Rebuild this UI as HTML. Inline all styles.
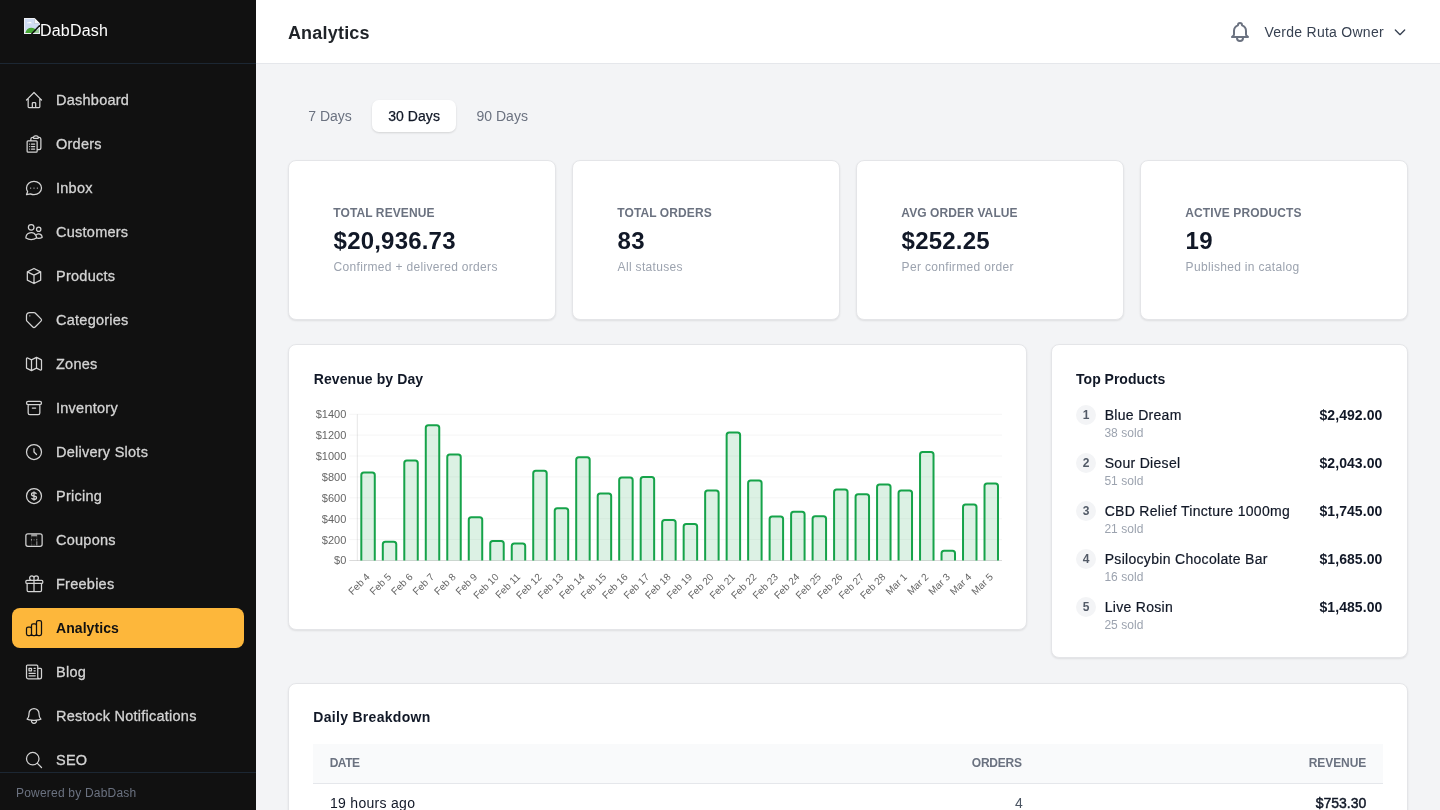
<!DOCTYPE html>
<html><head><meta charset="utf-8"><title>Analytics</title>
<style>
*{box-sizing:border-box;margin:0;padding:0}
html,body{width:1440px;height:810px;overflow:hidden;background:#f3f4f6;font-family:"Liberation Sans",sans-serif;color:#111827}
#side{position:absolute;left:0;top:0;width:256px;height:810px;background:#111111;overflow:hidden}
#shead{position:absolute;left:0;top:0;width:256px;height:64px;border-bottom:1px solid #1c2733}
#logo{position:absolute;left:24px;top:18px}
#lname{position:absolute;left:40px;top:21px;font-size:16px;line-height:20px;color:#fff;letter-spacing:.2px}
.ni{position:absolute;left:12px;width:232px;height:40px;border-radius:8px;color:#d4d4d4;font-size:14.5px;font-weight:400}
.ni .ic{position:absolute;left:12px;top:10px}
.ni span{position:absolute;left:44px;top:11px;line-height:18px;white-space:nowrap;-webkit-text-stroke:.3px currentColor;letter-spacing:.25px}
.ni.act{background:#fdb73b;color:#111;}
.ni.act span{font-weight:700;-webkit-text-stroke:0;letter-spacing:.07px;font-size:14px}
#sfoot{position:absolute;left:0;top:772px;width:256px;height:38px;background:#111111;border-top:1px solid #1c2733}
#sfoot span{position:absolute;left:16px;top:13px;font-size:12px;line-height:14px;color:#6b7280;letter-spacing:.2px}
#top{position:absolute;left:256px;top:0;width:1184px;height:64px;background:#fff;border-bottom:1px solid #e5e7eb}
#bell{position:absolute;left:1228px;top:20px;color:#6b7280}
#chev{position:absolute;left:1392px;top:24px;color:#374151}
.t{position:absolute;white-space:nowrap}
.pill{position:absolute;left:372px;top:100px;width:84px;height:32px;border-radius:7px;background:#fff;box-shadow:0 1px 2px rgba(0,0,0,.08),0 1px 3px rgba(0,0,0,.07)}
.card{position:absolute;background:#fff;border:1px solid #e4e5e8;border-radius:8px;box-shadow:0 1px 2px rgba(0,0,0,.09)}
.chart{position:absolute;left:0;top:0;pointer-events:none}
.tk{font-family:"Liberation Sans",sans-serif;font-size:11px;fill:#666}
.rk{position:absolute;left:1076px;width:20px;height:20px;border-radius:10px;background:#f3f4f6;color:#525a67;font-size:12px;font-weight:700;line-height:20px;text-align:center}
#thead{position:absolute;left:313px;top:744px;width:1070px;height:39.5px;background:#f9fafb;border-bottom:1px solid #e5e7eb}
#wrap{position:absolute;left:0;top:0;width:1440px;height:810px;will-change:transform}
</style></head><body><div id="wrap">
<div id="side">
<div id="shead">
<svg id="logo" width="16" height="16" viewBox="0 0 16 16"><path d="M0 0h10.500L16 5.500V16H0z" fill="#eef0f4"/><path d="M1 1h9l5 5v9H1z" fill="#cfdcf3"/><path d="M10.500 0v5.500H16z" fill="#f6f7f9"/><path d="M10.500 0.800v4.700h4.700" fill="none" stroke="#b9c0cc" stroke-width=".6"/><path d="M2.800 5.200c.4-1 1.300-1.200 1.900-.7.500-1.100 2.200-1 2.600.2.700 0 .9.300.9.500z" fill="#fff"/><path d="M1.300 15c.8-3.300 3.200-5.200 6-5.200 2.200 0 4 1 5.200 2.600l2.500-1.500V15z" fill="#46a635"/><path d="M16 7.200L7.500 16" stroke="#111" stroke-width="1.600"/><path d="M16 9v7h-7z" fill="#e9eef5" opacity=".55"/></svg>
<div id="lname">DabDash</div>
</div>
<a class="ni" style="top:80px"><svg class="ic" width="20" height="20" viewBox="0 0 24 24" fill="none" stroke="currentColor" stroke-width="1.5" stroke-linecap="round" stroke-linejoin="round" ><path d="M3 12l2-2m0 0l7-7 7 7M5 10v10a1 1 0 001 1h3m10-11l2 2m-2-2v10a1 1 0 01-1 1h-3m-6 0a1 1 0 001-1v-4a1 1 0 011-1h2a1 1 0 011 1v4a1 1 0 001 1m-6 0h6"/></svg><span>Dashboard</span></a>
<a class="ni" style="top:124px"><svg class="ic" width="20" height="20" viewBox="0 0 24 24" fill="none" stroke="currentColor" stroke-width="1.5" stroke-linecap="round" stroke-linejoin="round" ><path d="M9 12h3.75M9 15h3.75M9 18h3.75m3 .75H18a2.25 2.25 0 002.25-2.25V6.108c0-1.135-.845-2.098-1.976-2.192a48.424 48.424 0 00-1.123-.08m-5.801 0c-.065.21-.1.433-.1.664 0 .414.336.75.75.75h4.5a.75.75 0 00.75-.75 2.25 2.25 0 00-.1-.664m-5.8 0A2.251 2.251 0 0113.5 2.25H15c1.012 0 1.867.668 2.15 1.586m-5.8 0c-.376.023-.75.05-1.124.08C9.095 4.01 8.25 4.973 8.25 6.108V8.25m0 0H4.875c-.621 0-1.125.504-1.125 1.125v11.25c0 .621.504 1.125 1.125 1.125h9.75c.621 0 1.125-.504 1.125-1.125V9.375c0-.621-.504-1.125-1.125-1.125H8.25zM6.75 12h.008v.008H6.75V12zm0 3h.008v.008H6.75V15zm0 3h.008v.008H6.75V18z"/></svg><span>Orders</span></a>
<a class="ni" style="top:168px"><svg class="ic" width="20" height="20" viewBox="0 0 24 24" fill="none" stroke="currentColor" stroke-width="1.5" stroke-linecap="round" stroke-linejoin="round" ><path d="M8 12h.01M12 12h.01M16 12h.01M21 12c0 4.418-4.03 8-9 8a9.863 9.863 0 01-4.255-.949L3 20l1.395-3.72C3.512 15.042 3 13.574 3 12c0-4.418 4.03-8 9-8s9 3.582 9 8z"/></svg><span>Inbox</span></a>
<a class="ni" style="top:212px"><svg class="ic" width="20" height="20" viewBox="0 0 24 24" fill="none" stroke="currentColor" stroke-width="1.5" stroke-linecap="round" stroke-linejoin="round" ><path d="M15 19.128a9.38 9.38 0 002.625.372 9.337 9.337 0 004.121-.952 4.125 4.125 0 00-7.533-2.493M15 19.128v-.003c0-1.113-.285-2.16-.786-3.07M15 19.128v.106A12.318 12.318 0 018.624 21c-2.331 0-4.512-.645-6.374-1.766l-.001-.109a6.375 6.375 0 0111.964-3.07M12 6.375a3.375 3.375 0 11-6.75 0 3.375 3.375 0 016.75 0zm8.25 2.25a2.625 2.625 0 11-5.25 0 2.625 2.625 0 015.25 0z"/></svg><span>Customers</span></a>
<a class="ni" style="top:256px"><svg class="ic" width="20" height="20" viewBox="0 0 24 24" fill="none" stroke="currentColor" stroke-width="1.5" stroke-linecap="round" stroke-linejoin="round" ><path d="M20 7l-8-4-8 4m16 0l-8 4m8-4v10l-8 4m0-10L4 7m8 4v10M4 7v10l8 4"/></svg><span>Products</span></a>
<a class="ni" style="top:300px"><svg class="ic" width="20" height="20" viewBox="0 0 24 24" fill="none" stroke="currentColor" stroke-width="1.5" stroke-linecap="round" stroke-linejoin="round" ><path d="M7 7h.01M7 3h5c.512 0 1.024.195 1.414.586l7 7a2 2 0 010 2.828l-7 7a2 2 0 01-2.828 0l-7-7A1.994 1.994 0 013 12V7a4 4 0 014-4z"/></svg><span>Categories</span></a>
<a class="ni" style="top:344px"><svg class="ic" width="20" height="20" viewBox="0 0 24 24" fill="none" stroke="currentColor" stroke-width="1.5" stroke-linecap="round" stroke-linejoin="round" ><path d="M9 20l-5.447-2.724A1 1 0 013 16.382V5.618a1 1 0 011.447-.894L9 7m0 13l6-3m-6 3V7m6 10l4.553 2.276A1 1 0 0021 18.382V7.618a1 1 0 00-.553-.894L15 4m0 13V4m0 0L9 7"/></svg><span>Zones</span></a>
<a class="ni" style="top:388px"><svg class="ic" width="20" height="20" viewBox="0 0 24 24" fill="none" stroke="currentColor" stroke-width="1.5" stroke-linecap="round" stroke-linejoin="round" ><path d="M5 8h14M5 8a2 2 0 110-4h14a2 2 0 110 4M5 8v10a2 2 0 002 2h10a2 2 0 002-2V8m-9 4h4"/></svg><span>Inventory</span></a>
<a class="ni" style="top:432px"><svg class="ic" width="20" height="20" viewBox="0 0 24 24" fill="none" stroke="currentColor" stroke-width="1.5" stroke-linecap="round" stroke-linejoin="round" ><path d="M12 8v4l3 3m6-3a9 9 0 11-18 0 9 9 0 0118 0z"/></svg><span>Delivery Slots</span></a>
<a class="ni" style="top:476px"><svg class="ic" width="20" height="20" viewBox="0 0 24 24" fill="none" stroke="currentColor" stroke-width="1.5" stroke-linecap="round" stroke-linejoin="round" ><path d="M12 8c-1.657 0-3 .895-3 2s1.343 2 3 2 3 .895 3 2-1.343 2-3 2m0-8c1.11 0 2.08.402 2.599 1M12 8V7m0 1v8m0 0v1m0-1c-1.11 0-2.08-.402-2.599-1M21 12a9 9 0 11-18 0 9 9 0 0118 0z"/></svg><span>Pricing</span></a>
<a class="ni" style="top:520px"><svg class="ic" width="20" height="20" viewBox="0 0 24 24" fill="none" stroke="currentColor" stroke-width="1.5" stroke-linecap="round" stroke-linejoin="round" ><rect x="2.25" y="4.6" width="19.5" height="15" rx="2.4"/><path d="M8.600 6.400h7.200" stroke-width="2.400" stroke-linecap="butt" opacity=".7"/><path d="M8.900 7.500v11M15.400 7.500v3" stroke-width="1" opacity=".18"/><path d="M9 11.700h.01M15.300 11.700h.01" stroke-width="1.500"/><path d="M12.100 11.700h.01" stroke-width="1.500" opacity=".55"/><path d="M15.400 13.500v5" stroke-width="1.100" stroke-linecap="butt" opacity=".8"/><path d="M9.500 17.800h.01M12.100 17.800h.01" stroke-width="1.300" opacity=".4"/></svg><span>Coupons</span></a>
<a class="ni" style="top:564px"><svg class="ic" width="20" height="20" viewBox="0 0 24 24" fill="none" stroke="currentColor" stroke-width="1.5" stroke-linecap="round" stroke-linejoin="round" ><path d="M21 11.25v8.25a1.5 1.5 0 01-1.5 1.5H5.25a1.5 1.5 0 01-1.5-1.5v-8.25M12 4.875A2.625 2.625 0 109.375 7.5H12m0-2.625V7.5m0-2.625A2.625 2.625 0 1114.625 7.5H12m0 0V21m-8.625-9.75h18c.621 0 1.125-.504 1.125-1.125v-1.5c0-.621-.504-1.125-1.125-1.125h-18c-.621 0-1.125.504-1.125 1.125v1.5c0 .621.504 1.125 1.125 1.125z"/></svg><span>Freebies</span></a>
<a class="ni act" style="top:608px"><svg class="ic" width="20" height="20" viewBox="0 0 24 24" fill="none" stroke="currentColor" stroke-width="1.5" stroke-linecap="round" stroke-linejoin="round" ><path d="M9 19v-6a2 2 0 00-2-2H5a2 2 0 00-2 2v6a2 2 0 002 2h2a2 2 0 002-2zm0 0V9a2 2 0 012-2h2a2 2 0 012 2v10m-6 0a2 2 0 002 2h2a2 2 0 002-2m0 0V5a2 2 0 012-2h2a2 2 0 012 2v14a2 2 0 01-2 2h-2a2 2 0 01-2-2z"/></svg><span>Analytics</span></a>
<a class="ni" style="top:652px"><svg class="ic" width="20" height="20" viewBox="0 0 24 24" fill="none" stroke="currentColor" stroke-width="1.5" stroke-linecap="round" stroke-linejoin="round" ><path d="M12 7.5h1.5m-1.5 3h1.5m-7.500 3h7.500m-7.500 3h7.500m3-9h3.375c.621 0 1.125.504 1.125 1.125V18a2.250 2.250 0 01-2.250 2.250M16.500 7.500V18a2.250 2.250 0 002.250 2.250M16.500 7.500V4.875c0-.621-.504-1.125-1.125-1.125H4.125C3.504 3.750 3 4.254 3 4.875V18a2.250 2.250 0 002.250 2.250h13.500M6 7.500h3v3H6v-3z"/></svg><span>Blog</span></a>
<a class="ni" style="top:696px"><svg class="ic" width="20" height="20" viewBox="0 0 24 24" fill="none" stroke="currentColor" stroke-width="1.5" stroke-linecap="round" stroke-linejoin="round" ><path d="M14.857 17.082a23.848 23.848 0 005.454-1.310A8.967 8.967 0 0118 9.750v-.700V9A6 6 0 006 9v.750a8.967 8.967 0 01-2.312 6.022c1.733.640 3.560 1.085 5.455 1.310m5.714 0a24.255 24.255 0 01-5.714 0m5.714 0a3 3 0 11-5.714 0"/></svg><span>Restock Notifications</span></a>
<a class="ni" style="top:740px"><svg class="ic" width="20" height="20" viewBox="0 0 24 24" fill="none" stroke="currentColor" stroke-width="1.5" stroke-linecap="round" stroke-linejoin="round" ><path d="M21 21l-5.197-5.197m0 0A7.500 7.500 0 105.196 5.196a7.500 7.500 0 0010.607 10.607z"/></svg><span>SEO</span></a>

<div id="sfoot"><span>Powered by DabDash</span></div>
</div>
<div id="top"></div>
<div id="bell"><svg class="ic" width="24" height="24" viewBox="0 0 24 24" fill="none" stroke="currentColor" stroke-width="2" stroke-linecap="round" stroke-linejoin="round" ><path d="M15 17h5l-1.405-1.405A2.032 2.032 0 0118 14.158V11a6.002 6.002 0 00-4-5.659V5a2 2 0 10-4 0v.341C7.670 6.165 6 8.388 6 11v3.159c0 .538-.214 1.055-.595 1.436L4 17h5m6 0v1a3 3 0 11-6 0v-1m6 0H9"/></svg></div>
<div id="chev"><svg class="ic" width="16" height="16" viewBox="0 0 24 24" fill="none" stroke="currentColor" stroke-width="2" stroke-linecap="round" stroke-linejoin="round" ><path d="M19 9l-7 7-7-7"/></svg></div>
<div class="t" style="font-size:18px;line-height:20px;color:#1f2328;letter-spacing:0.205px;top:22.80px;font-weight:700;left:287.90px;">Analytics</div>
<div class="t" style="font-size:14px;line-height:20px;color:#374151;letter-spacing:0.261px;top:22.00px;left:1264.50px;">Verde Ruta Owner</div>
<div class="pill"></div><div class="t" style="font-size:14px;line-height:20px;color:#6b7280;letter-spacing:-0.013px;top:106.10px;left:308.25px;">7 Days</div>
<div class="t" style="font-size:14px;line-height:20px;color:#111827;letter-spacing:0.037px;top:106.10px;left:388.30px;-webkit-text-stroke:.25px #111827;">30 Days</div>
<div class="t" style="font-size:14px;line-height:20px;color:#6b7280;letter-spacing:0.038px;top:106.10px;left:476.40px;">90 Days</div>
<div class="card" style="left:288px;top:160px;width:268px;height:160px"></div><div class="t" style="font-size:12px;line-height:20px;color:#6b7280;letter-spacing:0.104px;top:202.60px;font-weight:700;left:333.25px;">TOTAL REVENUE</div>
<div class="t" style="font-size:24px;line-height:32px;color:#111827;letter-spacing:0.197px;top:225.25px;font-weight:700;left:333.60px;">$20,936.73</div>
<div class="t" style="font-size:12px;line-height:20px;color:#9ca3af;letter-spacing:0.324px;top:256.60px;left:333.60px;">Confirmed + delivered orders</div>
<div class="card" style="left:572px;top:160px;width:268px;height:160px"></div><div class="t" style="font-size:12px;line-height:20px;color:#6b7280;letter-spacing:0.104px;top:202.60px;font-weight:700;left:617.25px;">TOTAL ORDERS</div>
<div class="t" style="font-size:24px;line-height:32px;color:#111827;letter-spacing:0.197px;top:225.25px;font-weight:700;left:617.60px;">83</div>
<div class="t" style="font-size:12px;line-height:20px;color:#9ca3af;letter-spacing:0.324px;top:256.60px;left:617.60px;">All statuses</div>
<div class="card" style="left:856px;top:160px;width:268px;height:160px"></div><div class="t" style="font-size:12px;line-height:20px;color:#6b7280;letter-spacing:0.104px;top:202.60px;font-weight:700;left:901.25px;">AVG ORDER VALUE</div>
<div class="t" style="font-size:24px;line-height:32px;color:#111827;letter-spacing:0.197px;top:225.25px;font-weight:700;left:901.60px;">$252.25</div>
<div class="t" style="font-size:12px;line-height:20px;color:#9ca3af;letter-spacing:0.324px;top:256.60px;left:901.60px;">Per confirmed order</div>
<div class="card" style="left:1140px;top:160px;width:268px;height:160px"></div><div class="t" style="font-size:12px;line-height:20px;color:#6b7280;letter-spacing:0.104px;top:202.60px;font-weight:700;left:1185.25px;">ACTIVE PRODUCTS</div>
<div class="t" style="font-size:24px;line-height:32px;color:#111827;letter-spacing:0.197px;top:225.25px;font-weight:700;left:1185.60px;">19</div>
<div class="t" style="font-size:12px;line-height:20px;color:#9ca3af;letter-spacing:0.324px;top:256.60px;left:1185.60px;">Published in catalog</div>
<div class="card" style="left:288px;top:344px;width:739px;height:286px"></div><div class="t" style="font-size:14px;line-height:20px;color:#111827;letter-spacing:0.089px;top:368.90px;font-weight:700;left:313.75px;">Revenue by Day</div>
<svg class="chart" width="1440" height="810" viewBox="0 0 1440 810"><line x1="349.30" y1="414.25" x2="1002.00" y2="414.25" stroke="rgba(0,0,0,0.045)" stroke-width="1"/><text x="346.30" y="418.15" text-anchor="end" class="tk">$1400</text><line x1="349.30" y1="435.14" x2="1002.00" y2="435.14" stroke="rgba(0,0,0,0.045)" stroke-width="1"/><text x="346.30" y="439.04" text-anchor="end" class="tk">$1200</text><line x1="349.30" y1="456.04" x2="1002.00" y2="456.04" stroke="rgba(0,0,0,0.045)" stroke-width="1"/><text x="346.30" y="459.94" text-anchor="end" class="tk">$1000</text><line x1="349.30" y1="476.93" x2="1002.00" y2="476.93" stroke="rgba(0,0,0,0.045)" stroke-width="1"/><text x="346.30" y="480.83" text-anchor="end" class="tk">$800</text><line x1="349.30" y1="497.82" x2="1002.00" y2="497.82" stroke="rgba(0,0,0,0.045)" stroke-width="1"/><text x="346.30" y="501.72" text-anchor="end" class="tk">$600</text><line x1="349.30" y1="518.71" x2="1002.00" y2="518.71" stroke="rgba(0,0,0,0.045)" stroke-width="1"/><text x="346.30" y="522.61" text-anchor="end" class="tk">$400</text><line x1="349.30" y1="539.61" x2="1002.00" y2="539.61" stroke="rgba(0,0,0,0.045)" stroke-width="1"/><text x="346.30" y="543.51" text-anchor="end" class="tk">$200</text><line x1="349.30" y1="560.50" x2="1002.00" y2="560.50" stroke="rgba(0,0,0,0.045)" stroke-width="1"/><text x="346.30" y="564.40" text-anchor="end" class="tk">$0</text><line x1="357.30" y1="414.25" x2="357.30" y2="560.50" stroke="rgba(0,0,0,0.1)" stroke-width="1"/><line x1="349.30" y1="560.50" x2="1002.00" y2="560.50" stroke="rgba(0,0,0,0.11)" stroke-width="1"/><path d="M361.31 560.50V475.10Q361.31 472.60 363.81 472.60H372.28Q374.78 472.60 374.78 475.10V560.50" fill="rgba(22,163,74,0.15)" stroke="#16a34a" stroke-width="2" stroke-linecap="butt"/><text transform="translate(363.75,570.80) rotate(-45)" text-anchor="end" class="tk" style="font-size:10px" y="9.5">Feb 4</text><path d="M382.80 560.50V544.20Q382.80 541.70 385.30 541.70H393.77Q396.27 541.70 396.27 544.20V560.50" fill="rgba(22,163,74,0.15)" stroke="#16a34a" stroke-width="2" stroke-linecap="butt"/><text transform="translate(385.24,570.80) rotate(-45)" text-anchor="end" class="tk" style="font-size:10px" y="9.5">Feb 5</text><path d="M404.29 560.50V462.90Q404.29 460.40 406.79 460.40H415.26Q417.76 460.40 417.76 462.90V560.50" fill="rgba(22,163,74,0.15)" stroke="#16a34a" stroke-width="2" stroke-linecap="butt"/><text transform="translate(406.73,570.80) rotate(-45)" text-anchor="end" class="tk" style="font-size:10px" y="9.5">Feb 6</text><path d="M425.78 560.50V427.80Q425.78 425.30 428.28 425.30H436.75Q439.25 425.30 439.25 427.80V560.50" fill="rgba(22,163,74,0.15)" stroke="#16a34a" stroke-width="2" stroke-linecap="butt"/><text transform="translate(428.21,570.80) rotate(-45)" text-anchor="end" class="tk" style="font-size:10px" y="9.5">Feb 7</text><path d="M447.27 560.50V456.90Q447.27 454.40 449.77 454.40H458.24Q460.74 454.40 460.74 456.90V560.50" fill="rgba(22,163,74,0.15)" stroke="#16a34a" stroke-width="2" stroke-linecap="butt"/><text transform="translate(449.70,570.80) rotate(-45)" text-anchor="end" class="tk" style="font-size:10px" y="9.5">Feb 8</text><path d="M468.76 560.50V519.70Q468.76 517.20 471.26 517.20H479.73Q482.23 517.20 482.23 519.70V560.50" fill="rgba(22,163,74,0.15)" stroke="#16a34a" stroke-width="2" stroke-linecap="butt"/><text transform="translate(471.19,570.80) rotate(-45)" text-anchor="end" class="tk" style="font-size:10px" y="9.5">Feb 9</text><path d="M490.25 560.50V543.60Q490.25 541.10 492.75 541.10H501.22Q503.72 541.10 503.72 543.60V560.50" fill="rgba(22,163,74,0.15)" stroke="#16a34a" stroke-width="2" stroke-linecap="butt"/><text transform="translate(492.69,570.80) rotate(-45)" text-anchor="end" class="tk" style="font-size:10px" y="9.5">Feb 10</text><path d="M511.74 560.50V545.90Q511.74 543.40 514.24 543.40H522.71Q525.21 543.40 525.21 545.90V560.50" fill="rgba(22,163,74,0.15)" stroke="#16a34a" stroke-width="2" stroke-linecap="butt"/><text transform="translate(514.18,570.80) rotate(-45)" text-anchor="end" class="tk" style="font-size:10px" y="9.5">Feb 11</text><path d="M533.23 560.50V473.20Q533.23 470.70 535.73 470.70H544.20Q546.70 470.70 546.70 473.20V560.50" fill="rgba(22,163,74,0.15)" stroke="#16a34a" stroke-width="2" stroke-linecap="butt"/><text transform="translate(535.67,570.80) rotate(-45)" text-anchor="end" class="tk" style="font-size:10px" y="9.5">Feb 12</text><path d="M554.72 560.50V510.70Q554.72 508.20 557.22 508.20H565.69Q568.19 508.20 568.19 510.70V560.50" fill="rgba(22,163,74,0.15)" stroke="#16a34a" stroke-width="2" stroke-linecap="butt"/><text transform="translate(557.16,570.80) rotate(-45)" text-anchor="end" class="tk" style="font-size:10px" y="9.5">Feb 13</text><path d="M576.21 560.50V459.80Q576.21 457.30 578.71 457.30H587.18Q589.68 457.30 589.68 459.80V560.50" fill="rgba(22,163,74,0.15)" stroke="#16a34a" stroke-width="2" stroke-linecap="butt"/><text transform="translate(578.65,570.80) rotate(-45)" text-anchor="end" class="tk" style="font-size:10px" y="9.5">Feb 14</text><path d="M597.70 560.50V496.10Q597.70 493.60 600.20 493.60H608.67Q611.17 493.60 611.17 496.10V560.50" fill="rgba(22,163,74,0.15)" stroke="#16a34a" stroke-width="2" stroke-linecap="butt"/><text transform="translate(600.14,570.80) rotate(-45)" text-anchor="end" class="tk" style="font-size:10px" y="9.5">Feb 15</text><path d="M619.19 560.50V480.10Q619.19 477.60 621.69 477.60H630.16Q632.66 477.60 632.66 480.10V560.50" fill="rgba(22,163,74,0.15)" stroke="#16a34a" stroke-width="2" stroke-linecap="butt"/><text transform="translate(621.62,570.80) rotate(-45)" text-anchor="end" class="tk" style="font-size:10px" y="9.5">Feb 16</text><path d="M640.68 560.50V479.50Q640.68 477.00 643.18 477.00H651.65Q654.15 477.00 654.15 479.50V560.50" fill="rgba(22,163,74,0.15)" stroke="#16a34a" stroke-width="2" stroke-linecap="butt"/><text transform="translate(643.12,570.80) rotate(-45)" text-anchor="end" class="tk" style="font-size:10px" y="9.5">Feb 17</text><path d="M662.17 560.50V522.50Q662.17 520.00 664.67 520.00H673.14Q675.64 520.00 675.64 522.50V560.50" fill="rgba(22,163,74,0.15)" stroke="#16a34a" stroke-width="2" stroke-linecap="butt"/><text transform="translate(664.61,570.80) rotate(-45)" text-anchor="end" class="tk" style="font-size:10px" y="9.5">Feb 18</text><path d="M683.66 560.50V526.40Q683.66 523.90 686.16 523.90H694.63Q697.13 523.90 697.13 526.40V560.50" fill="rgba(22,163,74,0.15)" stroke="#16a34a" stroke-width="2" stroke-linecap="butt"/><text transform="translate(686.10,570.80) rotate(-45)" text-anchor="end" class="tk" style="font-size:10px" y="9.5">Feb 19</text><path d="M705.15 560.50V492.90Q705.15 490.40 707.65 490.40H716.12Q718.62 490.40 718.62 492.90V560.50" fill="rgba(22,163,74,0.15)" stroke="#16a34a" stroke-width="2" stroke-linecap="butt"/><text transform="translate(707.59,570.80) rotate(-45)" text-anchor="end" class="tk" style="font-size:10px" y="9.5">Feb 20</text><path d="M726.64 560.50V434.90Q726.64 432.40 729.14 432.40H737.61Q740.11 432.40 740.11 434.90V560.50" fill="rgba(22,163,74,0.15)" stroke="#16a34a" stroke-width="2" stroke-linecap="butt"/><text transform="translate(729.08,570.80) rotate(-45)" text-anchor="end" class="tk" style="font-size:10px" y="9.5">Feb 21</text><path d="M748.13 560.50V482.90Q748.13 480.40 750.63 480.40H759.10Q761.60 480.40 761.60 482.90V560.50" fill="rgba(22,163,74,0.15)" stroke="#16a34a" stroke-width="2" stroke-linecap="butt"/><text transform="translate(750.57,570.80) rotate(-45)" text-anchor="end" class="tk" style="font-size:10px" y="9.5">Feb 22</text><path d="M769.62 560.50V519.10Q769.62 516.60 772.12 516.60H780.59Q783.09 516.60 783.09 519.10V560.50" fill="rgba(22,163,74,0.15)" stroke="#16a34a" stroke-width="2" stroke-linecap="butt"/><text transform="translate(772.06,570.80) rotate(-45)" text-anchor="end" class="tk" style="font-size:10px" y="9.5">Feb 23</text><path d="M791.11 560.50V514.30Q791.11 511.80 793.61 511.80H802.08Q804.58 511.80 804.58 514.30V560.50" fill="rgba(22,163,74,0.15)" stroke="#16a34a" stroke-width="2" stroke-linecap="butt"/><text transform="translate(793.55,570.80) rotate(-45)" text-anchor="end" class="tk" style="font-size:10px" y="9.5">Feb 24</text><path d="M812.60 560.50V518.70Q812.60 516.20 815.10 516.20H823.57Q826.07 516.20 826.07 518.70V560.50" fill="rgba(22,163,74,0.15)" stroke="#16a34a" stroke-width="2" stroke-linecap="butt"/><text transform="translate(815.04,570.80) rotate(-45)" text-anchor="end" class="tk" style="font-size:10px" y="9.5">Feb 25</text><path d="M834.09 560.50V491.90Q834.09 489.40 836.59 489.40H845.06Q847.56 489.40 847.56 491.90V560.50" fill="rgba(22,163,74,0.15)" stroke="#16a34a" stroke-width="2" stroke-linecap="butt"/><text transform="translate(836.53,570.80) rotate(-45)" text-anchor="end" class="tk" style="font-size:10px" y="9.5">Feb 26</text><path d="M855.58 560.50V496.70Q855.58 494.20 858.08 494.20H866.55Q869.05 494.20 869.05 496.70V560.50" fill="rgba(22,163,74,0.15)" stroke="#16a34a" stroke-width="2" stroke-linecap="butt"/><text transform="translate(858.02,570.80) rotate(-45)" text-anchor="end" class="tk" style="font-size:10px" y="9.5">Feb 27</text><path d="M877.07 560.50V487.00Q877.07 484.50 879.57 484.50H888.04Q890.54 484.50 890.54 487.00V560.50" fill="rgba(22,163,74,0.15)" stroke="#16a34a" stroke-width="2" stroke-linecap="butt"/><text transform="translate(879.51,570.80) rotate(-45)" text-anchor="end" class="tk" style="font-size:10px" y="9.5">Feb 28</text><path d="M898.56 560.50V492.90Q898.56 490.40 901.06 490.40H909.53Q912.03 490.40 912.03 492.90V560.50" fill="rgba(22,163,74,0.15)" stroke="#16a34a" stroke-width="2" stroke-linecap="butt"/><text transform="translate(901.00,570.80) rotate(-45)" text-anchor="end" class="tk" style="font-size:10px" y="9.5">Mar 1</text><path d="M920.05 560.50V454.60Q920.05 452.10 922.55 452.10H931.02Q933.52 452.10 933.52 454.60V560.50" fill="rgba(22,163,74,0.15)" stroke="#16a34a" stroke-width="2" stroke-linecap="butt"/><text transform="translate(922.49,570.80) rotate(-45)" text-anchor="end" class="tk" style="font-size:10px" y="9.5">Mar 2</text><path d="M941.54 560.50V553.20Q941.54 550.70 944.04 550.70H952.51Q955.01 550.70 955.01 553.20V560.50" fill="rgba(22,163,74,0.15)" stroke="#16a34a" stroke-width="2" stroke-linecap="butt"/><text transform="translate(943.98,570.80) rotate(-45)" text-anchor="end" class="tk" style="font-size:10px" y="9.5">Mar 3</text><path d="M963.03 560.50V506.90Q963.03 504.40 965.53 504.40H974.00Q976.50 504.40 976.50 506.90V560.50" fill="rgba(22,163,74,0.15)" stroke="#16a34a" stroke-width="2" stroke-linecap="butt"/><text transform="translate(965.47,570.80) rotate(-45)" text-anchor="end" class="tk" style="font-size:10px" y="9.5">Mar 4</text><path d="M984.52 560.50V486.00Q984.52 483.50 987.02 483.50H995.49Q997.99 483.50 997.99 486.00V560.50" fill="rgba(22,163,74,0.15)" stroke="#16a34a" stroke-width="2" stroke-linecap="butt"/><text transform="translate(986.96,570.80) rotate(-45)" text-anchor="end" class="tk" style="font-size:10px" y="9.5">Mar 5</text></svg><div class="card" style="left:1051px;top:344px;width:357px;height:314px"></div><div class="t" style="font-size:14px;line-height:20px;color:#111827;letter-spacing:-0.008px;top:369.00px;font-weight:700;left:1076.10px;">Top Products</div>
<div class="rk" style="top:405px">1</div><div class="t" style="font-size:14px;line-height:20px;color:#111827;letter-spacing:0.307px;top:405.20px;left:1104.70px;-webkit-text-stroke:.2px #111827;">Blue Dream</div>
<div class="t" style="font-size:12px;line-height:20px;color:#9ca3af;letter-spacing:0.052px;top:422.70px;left:1104.40px;">38 sold</div>
<div class="t" style="font-size:14px;line-height:20px;color:#111827;letter-spacing:0.086px;top:405.20px;font-weight:700;right:57.54px;">$2,492.00</div>
<div class="rk" style="top:453px">2</div><div class="t" style="font-size:14px;line-height:20px;color:#111827;letter-spacing:0.307px;top:453.20px;left:1104.70px;-webkit-text-stroke:.2px #111827;">Sour Diesel</div>
<div class="t" style="font-size:12px;line-height:20px;color:#9ca3af;letter-spacing:0.052px;top:470.70px;left:1104.40px;">51 sold</div>
<div class="t" style="font-size:14px;line-height:20px;color:#111827;letter-spacing:0.086px;top:453.20px;font-weight:700;right:57.54px;">$2,043.00</div>
<div class="rk" style="top:501px">3</div><div class="t" style="font-size:14px;line-height:20px;color:#111827;letter-spacing:0.307px;top:501.20px;left:1104.70px;-webkit-text-stroke:.2px #111827;">CBD Relief Tincture 1000mg</div>
<div class="t" style="font-size:12px;line-height:20px;color:#9ca3af;letter-spacing:0.052px;top:518.70px;left:1104.40px;">21 sold</div>
<div class="t" style="font-size:14px;line-height:20px;color:#111827;letter-spacing:0.086px;top:501.20px;font-weight:700;right:57.54px;">$1,745.00</div>
<div class="rk" style="top:549px">4</div><div class="t" style="font-size:14px;line-height:20px;color:#111827;letter-spacing:0.307px;top:549.20px;left:1104.70px;-webkit-text-stroke:.2px #111827;">Psilocybin Chocolate Bar</div>
<div class="t" style="font-size:12px;line-height:20px;color:#9ca3af;letter-spacing:0.052px;top:566.70px;left:1104.40px;">16 sold</div>
<div class="t" style="font-size:14px;line-height:20px;color:#111827;letter-spacing:0.086px;top:549.20px;font-weight:700;right:57.54px;">$1,685.00</div>
<div class="rk" style="top:597px">5</div><div class="t" style="font-size:14px;line-height:20px;color:#111827;letter-spacing:0.307px;top:597.20px;left:1104.70px;-webkit-text-stroke:.2px #111827;">Live Rosin</div>
<div class="t" style="font-size:12px;line-height:20px;color:#9ca3af;letter-spacing:0.052px;top:614.70px;left:1104.40px;">25 sold</div>
<div class="t" style="font-size:14px;line-height:20px;color:#111827;letter-spacing:0.086px;top:597.20px;font-weight:700;right:57.54px;">$1,485.00</div>
<div class="card" style="left:288px;top:683px;width:1120px;height:200px"></div><div class="t" style="font-size:14px;line-height:20px;color:#111827;letter-spacing:0.299px;top:706.70px;font-weight:700;left:313.30px;">Daily Breakdown</div>
<div id="thead"></div><div class="t" style="font-size:12px;line-height:20px;color:#6b7280;letter-spacing:-0.483px;top:752.90px;font-weight:700;left:329.70px;">DATE</div>
<div class="t" style="font-size:12px;line-height:20px;color:#6b7280;letter-spacing:-0.242px;top:752.90px;font-weight:700;left:971.80px;">ORDERS</div>
<div class="t" style="font-size:12px;line-height:20px;color:#6b7280;letter-spacing:-0.067px;top:752.90px;font-weight:700;left:1308.70px;">REVENUE</div>
<div class="t" style="font-size:14px;line-height:20px;color:#111827;letter-spacing:0.295px;top:793.30px;left:330.00px;">19 hours ago</div>
<div class="t" style="font-size:14px;line-height:20px;color:#4b5563;letter-spacing:0.000px;top:793.30px;left:1014.90px;">4</div>
<div class="t" style="font-size:14px;line-height:20px;color:#111827;letter-spacing:-0.021px;top:793.30px;left:1315.80px;-webkit-text-stroke:.45px #111827;">$753.30</div>

</div></body></html>
